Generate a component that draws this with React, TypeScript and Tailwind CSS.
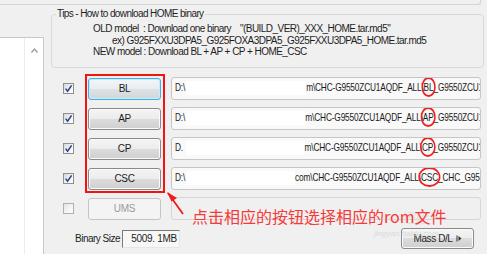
import React from "react";

const F = "font-['Liberation_Sans',Arial,sans-serif]";

function Check({ checked }: { checked: boolean }) {
  return (
    <div
      className={
        "w-[11px] h-[11px] border flex items-center justify-center " +
        (checked
          ? "border-[#8e8f8f] bg-[linear-gradient(135deg,#d8d8d8,#f4f4f4_60%,#ffffff)]"
          : "border-[#b0b0b0] bg-[linear-gradient(135deg,#e4e4e4,#f6f6f6_60%,#ffffff)]")
      }
    >
      {checked && (
        <svg width="9" height="9" viewBox="0 0 9 9">
          <path d="M1.6 4.6 L3.6 7.2 L7.6 1.4" stroke="#2b3f8c" strokeWidth="1.5" fill="none" />
        </svg>
      )}
    </div>
  );
}

function WinButton({ label, kind }: { label: string; kind: "normal" | "focus" | "disabled" }) {
  const cls =
    kind === "focus"
      ? "border-[#3fb0e0] bg-[linear-gradient(#f3f6f8,#e9edf0_50%,#dde2e5_50%,#d0d6da)] text-[#1a1a1a] shadow-[inset_0_0_0_1px_#c8ebf9]"
      : kind === "disabled"
      ? "border-[#c2c5c7] bg-[#f4f4f4] text-[#9a9a9a]"
      : "border-[#8a8a8a] bg-[linear-gradient(#f4f4f4,#ececec_50%,#dcdcdc_50%,#cfcfcf)] text-[#1a1a1a] shadow-[inset_0_0_0_1px_#fafafa]";
  return (
    <div
      className={
        "w-[73px] h-[22px] rounded-[3px] border flex items-center justify-center text-[10px] tracking-[-0.3px] " +
        cls
      }
    >
      {label}
    </div>
  );
}

function Circled({ children }: { children: React.ReactNode }) {
  return (
    <span className="relative">
      {children}
      <span className="absolute top-[-4px] bottom-[-4px] left-[-3px] right-[-3px] rounded-[50%] border-[2px] border-[#f02020]" />
    </span>
  );
}

function PathBox({
  lead,
  gap,
  pre,
  mark,
  post,
}: {
  lead: string;
  gap: number;
  pre: string;
  mark: string;
  post: string;
}) {
  return (
    <div className="w-[310px] h-[23px] rounded-[3px] border border-[#c6c6c6] bg-[#f9f9f9] overflow-hidden pl-[3px] pt-[3px] text-[10.5px] leading-[12px] text-[#1a1a1a]">
      <div className="flex items-start whitespace-nowrap w-max origin-left scale-x-[0.79] tracking-[-0.2px]">
        <span className="shrink-0 w-[14px]">{lead}</span>
        <span className="shrink-0 inline-block h-[14px] bg-white" style={{ width: gap }} />
        <span className="shrink-0">
          {pre}
          <Circled>{mark}</Circled>
          {post}
        </span>
      </div>
    </div>
  );
}

export default function App() {
  const rows = [
    { label: "BL", kind: "focus" as const, lead: "D:\\", gap: 152, pre: "m\\CHC-G9550ZCU1AQDF_ALL\\", mark: "BL", post: "_G9550ZCU1AQDF" },
    { label: "AP", kind: "normal" as const, lead: "D:\\", gap: 151, pre: "m\\CHC-G9550ZCU1AQDF_ALL\\", mark: "AP", post: "_G9550ZCU1AQDF" },
    { label: "CP", kind: "normal" as const, lead: "D.", gap: 150, pre: "m\\CHC-G9550ZCU1AQDF_ALL\\", mark: "CP", post: "_G9550ZCU1AQDF" },
    { label: "CSC", kind: "normal" as const, lead: "D:\\", gap: 138, pre: "com\\CHC-G9550ZCU1AQDF_ALL\\", mark: "CSC", post: "_CHC_G9550ZCU" },
  ];

  return (
    <div className={"relative w-[487px] h-[254px] overflow-hidden bg-[#f0f0f0] text-[#1e1e1e] " + F}>
      {/* top panel edge */}
      <div className="w-[481px] h-[5px] border-b border-r border-[#d4d4d4] rounded-br-[3px]" />

      <div className="flex">
        {/* left list box */}
        <div className="w-[44px] mt-[32px] h-[220px] flex border-t border-r border-[#c8c8c8] bg-white">
          <div className="w-[25px] h-full border-r border-[#ececec]" />
          <div className="w-[18px] h-full flex justify-center pt-[10px]">
            <svg width="7" height="5" viewBox="0 0 7 5">
              <path d="M0.5 4.5 L3.5 1 L6.5 4.5" stroke="#9a9a9a" strokeWidth="1.3" fill="none" />
            </svg>
          </div>
        </div>

        {/* right area */}
        <div className="ml-[7px] flex flex-col">
          <div className="relative mt-[9px] w-[433px] h-[54px] rounded-[4px] border border-[#d6dadc] pl-[41px] pt-[8px] text-[10px] leading-[11.5px] tracking-[-0.55px]">
            <div className="absolute left-[4px] top-[-7px] bg-[#f0f0f0] px-[1px] leading-[12px] tracking-[-0.6px] whitespace-nowrap">
              Tips - How to download HOME binary
            </div>
            <div className="whitespace-pre">
              {"OLD model  : Download one binary"}
              <span className="ml-[9px]">"(BUILD_VER)_XXX_HOME.tar.md5"</span>
            </div>
            <div className="whitespace-pre pl-[19px]">ex) G925FXXU3DPA5_G925FOXA3DPA5_G925FXXU3DPA5_HOME.tar.md5</div>
            <div className="whitespace-pre">NEW model : Download BL + AP + CP + HOME_CSC</div>
          </div>

          <div className="mt-[9px] flex flex-col gap-[7px]">
            {rows.map((r) => (
              <div key={r.label} className="h-[23px] flex items-center">
                <div className="ml-[12px]">
                  <Check checked />
                </div>
                <div className="ml-[14px]">
                  <WinButton label={r.label} kind={r.kind} />
                </div>
                <div className="ml-[10px]">
                  <PathBox lead={r.lead} gap={r.gap} pre={r.pre} mark={r.mark} post={r.post} />
                </div>
              </div>
            ))}
            <div className="h-[23px] flex items-center">
              <div className="ml-[12px]">
                <Check checked={false} />
              </div>
              <div className="ml-[14px]">
                <WinButton label="UMS" kind="disabled" />
              </div>
              <div className="ml-[10px] w-[310px] h-[23px] rounded-[3px] border border-[#d6d6d6] bg-[#f0f0f0]" />
            </div>
          </div>

          <div className="mt-[8px] h-[21px] flex items-center">
            <div className="ml-[24px] text-[10px] tracking-[-0.5px] w-[47px]">Binary Size</div>
            <div className="w-[58px] h-[18px] border border-t-[#7a7a7a] border-l-[#7a7a7a] border-b-[#e6e6e6] border-r-[#e6e6e6] bg-[#f7f7f7] text-right pr-[2px] text-[10px] leading-[16px] tracking-[-0.3px]">
              5009. 1MB
            </div>
            <div className="ml-[221px] w-[73px] h-[21px] rounded-[3px] border border-[#8a8a8a] bg-[linear-gradient(#f4f4f4,#ececec_50%,#dcdcdc_50%,#cfcfcf)] shadow-[inset_0_0_0_1px_#fafafa] flex items-center justify-center gap-[3px] text-[10px] tracking-[-0.4px]">
              <span>Mass D/L</span>
              <svg width="6" height="7" viewBox="0 0 6 7">
                <path d="M1 0.5 V6.5" stroke="#333" strokeWidth="1" />
                <path d="M2.5 1 L5.5 3.5 L2.5 6 Z" fill="#333" />
              </svg>
            </div>
          </div>
        </div>
      </div>

      {/* watermark (behind annotations) */}
      <div className="absolute left-[372px] top-[206px] flex items-end text-white/70 [text-shadow:0_0_1px_#d2d2d2] font-['Liberation_Sans',sans-serif]">
        <span className="text-[18px] leading-[20px] font-bold italic">Bai</span>
        <span className="ml-[2px] text-[14px] leading-[18px] text-[#dcdcdc]/70 [text-shadow:none] font-['Noto_Sans_CJK_SC',sans-serif]">经验</span>
      </div>
      <div className="absolute left-[374px] top-[229px] text-[8px] leading-[9px] text-[#dadada] italic">jingyan.baidu.com</div>

      {/* annotations */}
      <div className="absolute left-[85px] top-[74px] w-[80px] h-[119px] border-2 border-[#f01414]" />
      <svg className="absolute left-[160px] top-[186px]" width="30" height="32" viewBox="0 0 30 32">
        <path d="M8 7 L23 28" stroke="#f01c1c" strokeWidth="1.8" />
        <path d="M7 6 L17 12 L11.5 15.5 Z" fill="#f01c1c" />
      </svg>
      <div className="absolute left-[192px] top-[206px] whitespace-nowrap text-[16px] leading-[20px] text-[#f53a3a] font-['Noto_Sans_CJK_SC',sans-serif]">
        点击相应的按钮选择相应的rom文件
      </div>
    </div>
  );
}
